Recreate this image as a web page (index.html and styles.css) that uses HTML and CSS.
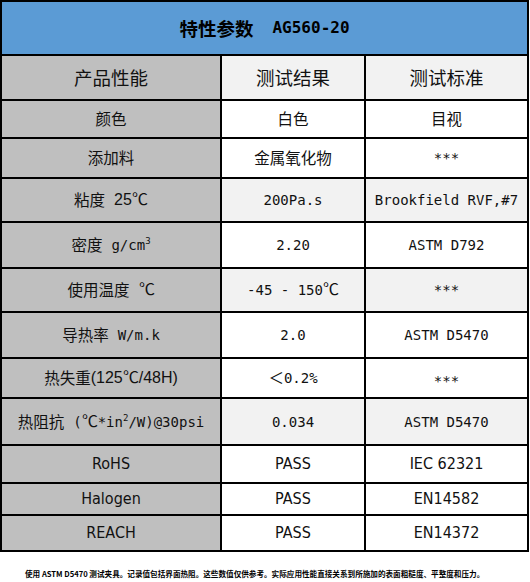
FILE: index.html
```html
<!DOCTYPE html>
<html lang="zh-CN">
<head>
<meta charset="utf-8">
<title>特性参数 AG560-20</title>
<link rel="stylesheet" href="styles.css">
</head>
<body>
<div class="sheet">
  <div class="grid">
    <div class="cell title">特性参数<span class="tm">AG560-20</span></div>

    <div class="cell k hd">产品性能</div>
    <div class="cell v alt hd">测试结果</div>
    <div class="cell v alt hd">测试标准</div>

    <div class="cell k">颜色</div>
    <div class="cell v">白色</div>
    <div class="cell v">目视</div>

    <div class="cell k">添加料</div>
    <div class="cell v">金属氧化物</div>
    <div class="cell v"><span class="m">***</span></div>

    <div class="cell k">粘度<span class="p gap">25℃</span></div>
    <div class="cell v alt"><span class="m">200Pa.s</span></div>
    <div class="cell v alt"><span class="m">Brookfield RVF,#7</span></div>

    <div class="cell k">密度<span class="m gap">g/cm<sup>3</sup></span></div>
    <div class="cell v"><span class="m">2.20</span></div>
    <div class="cell v"><span class="m">ASTM D792</span></div>

    <div class="cell k">使用温度<span class="p gap">℃</span></div>
    <div class="cell v alt"><span class="m">-45 - 150</span><span class="p">℃</span></div>
    <div class="cell v alt"><span class="m">***</span></div>

    <div class="cell k">导热率<span class="m gap">W/m.k</span></div>
    <div class="cell v"><span class="m">2.0</span></div>
    <div class="cell v"><span class="m">ASTM D5470</span></div>

    <div class="cell k">热失重<span class="p">(125℃/48H)</span></div>
    <div class="cell v">＜<span class="m">0.2%</span></div>
    <div class="cell v low"><span class="m">***</span></div>

    <div class="cell k">热阻抗<span class="m gap">(<span class="p">℃</span>*in<sup>2</sup>/W)@30psi</span></div>
    <div class="cell v alt"><span class="m">0.034</span></div>
    <div class="cell v alt"><span class="m">ASTM D5470</span></div>

    <div class="cell k"><span class="n">RoHS</span></div>
    <div class="cell v"><span class="n">PASS</span></div>
    <div class="cell v"><span class="n">IEC 62321</span></div>

    <div class="cell k"><span class="n">Halogen</span></div>
    <div class="cell v"><span class="n">PASS</span></div>
    <div class="cell v"><span class="n">EN14582</span></div>

    <div class="cell k"><span class="n">REACH</span></div>
    <div class="cell v"><span class="n">PASS</span></div>
    <div class="cell v"><span class="n">EN14372</span></div>
  </div>
  <p class="note">使用 ASTM D5470 测试夹具。记录值包括界面热阻。这些数值仅供参考。实际应用性能直接关系到所施加的表面粗糙度、平整度和压力。</p>
</div>
</body>
</html>
```

FILE: styles.css
```css
html, body {
  margin: 0;
  padding: 0;
  background: #ffffff;
}

.sheet {
  width: 530px;
}

.grid {
  display: grid;
  width: 525px;
  grid-template-columns: 218px 142px 161px;
  grid-template-rows: 52px 43px 36px 38px 42px 44px 42px 44px 38px 45px 36px 30px 34px;
  gap: 2px;
  padding: 2px;
  background: #000000;
  font-family: "Noto Sans CJK SC", sans-serif;
  color: #111111;
}

.cell {
  display: flex;
  align-items: center;
  justify-content: center;
  background: #ffffff;
  font-size: 15.5px;
  white-space: nowrap;
  line-height: 1;
}

.title {
  grid-column: 1 / 4;
  background: #5b9bd5;
  font-size: 18.5px;
  font-weight: 700;
  color: #000000;
}

.tm {
  margin-left: 19px;
  font-family: "DejaVu Sans Mono", monospace;
  font-size: 16px;
  font-weight: 700;
}

.k {
  background: #bfbfbf;
}

.alt {
  background: #f2f2f2;
}

.hd {
  font-size: 18.5px;
}

.m {
  font-family: "DejaVu Sans Mono", monospace;
  font-size: 14px;
}

.p {
  font-family: "Liberation Sans", Arial, sans-serif;
  font-size: 16px;
}

.gap {
  margin-left: 9px;
}

.n {
  font-family: "Liberation Sans Narrow", "DejaVu Sans Condensed", "Liberation Sans", sans-serif;
  font-size: 16px;
}

sup {
  font-size: 9px;
  vertical-align: 6px;
  line-height: 0;
}

.low {
  padding-top: 6px;
}

.note {
  margin: 16px 0 0 25px;
  font-family: "Noto Sans CJK SC", sans-serif;
  font-size: 7.6px;
  font-weight: 700;
  color: #000000;
  white-space: nowrap;
}
```
